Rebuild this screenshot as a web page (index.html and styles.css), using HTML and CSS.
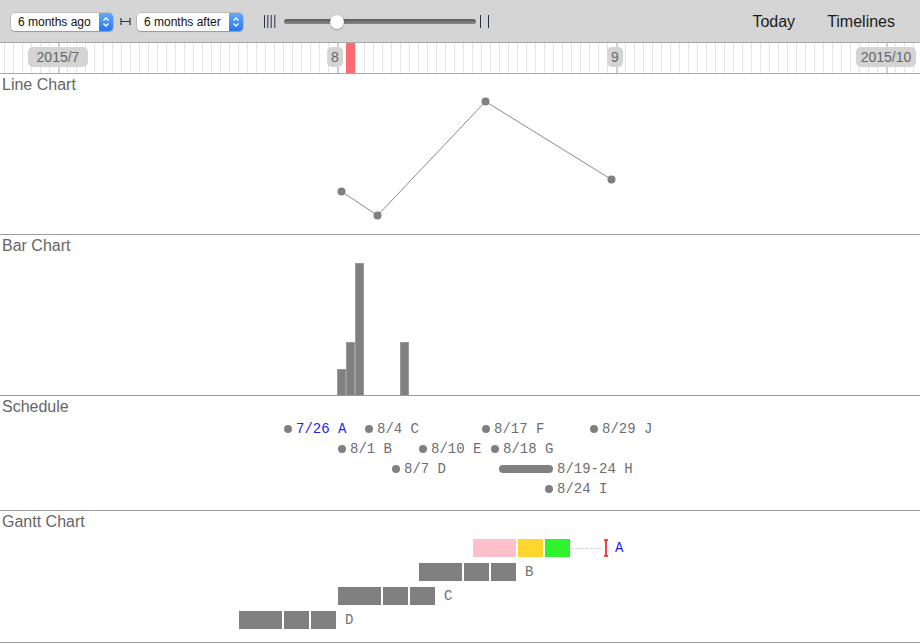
FILE: index.html
```html
<!DOCTYPE html>
<html>
<head>
<meta charset="utf-8">
<link rel="stylesheet" href="styles.css">
</head>
<body>
<div class="toolbar">
  <div class="tools-left">
    <div class="select w1"><span class="sel-text">6 months ago</span><span class="stepper"><svg width="14" height="18" viewBox="0 0 14 18"><path d="M4.5 7.5 L7 5 L9.5 7.5" fill="none" stroke="#fff" stroke-width="1.4"/><path d="M4.5 10.5 L7 13 L9.5 10.5" fill="none" stroke="#fff" stroke-width="1.4"/></svg></span></div>
    <svg class="span-icon" width="11" height="9" viewBox="0 0 11 9"><path d="M1 1 V8 M10 1 V8 M1 4.5 H10" stroke="#333" stroke-width="1.2" fill="none"/></svg>
    <div class="select w2"><span class="sel-text">6 months after</span><span class="stepper"><svg width="14" height="18" viewBox="0 0 14 18"><path d="M4.5 7.5 L7 5 L9.5 7.5" fill="none" stroke="#fff" stroke-width="1.4"/><path d="M4.5 10.5 L7 13 L9.5 10.5" fill="none" stroke="#fff" stroke-width="1.4"/></svg></span></div>
    <svg class="ticks4" width="12" height="14" viewBox="0 0 12 14"><path d="M0.5 0 V13 M3.8 0 V13 M7.2 0 V13 M10.8 0 V13" stroke="#2b2f44" stroke-width="1"/></svg>
    <div class="slider"><div class="track"></div><div class="thumb"></div></div>
    <svg class="ticks2" width="11" height="14" viewBox="0 0 11 14"><path d="M1.5 0 V13 M9.5 0 V13" stroke="#2b2f44" stroke-width="1"/></svg>
  </div>
  <div class="tools-right"><span class="tool">Today</span><span class="tool">Timelines</span></div>
</div>

<div class="ruler">
  <div class="mtick" style="left:58px"></div>
  <div class="mtick" style="left:337px"></div>
  <div class="mtick" style="left:616px"></div>
  <div class="mtick" style="left:886px"></div>
  <div class="today" style="left:346px"></div>
  <div class="mlabel year" style="left:58px">2015/7</div>
  <div class="mlabel" style="left:335px">8</div>
  <div class="mlabel" style="left:615px">9</div>
  <div class="mlabel year" style="left:886px">2015/10</div>
</div>

<section class="panel tall">
  <div class="title">Line Chart</div>
  <svg class="canvas" width="920" height="160" viewBox="0 0 920 160">
    <polyline points="341.5,117.5 377.5,141.5 485.5,27.5 611.5,105.5" fill="none" stroke="#8a8a8a" stroke-width="1"/>
    <circle cx="341.5" cy="117.5" r="4" fill="#808080"/>
    <circle cx="377.5" cy="141.5" r="4" fill="#808080"/>
    <circle cx="485.5" cy="27.5" r="4" fill="#808080"/>
    <circle cx="611.5" cy="105.5" r="4" fill="#808080"/>
  </svg>
</section>

<section class="panel tall">
  <div class="title">Bar Chart</div>
  <svg class="canvas" width="920" height="160" viewBox="0 0 920 160">
    <rect x="337.5" y="134.5" width="8" height="26" fill="#808080" stroke="#9a9a9a"/>
    <rect x="346.5" y="107.5" width="8" height="53" fill="#808080" stroke="#9a9a9a"/>
    <rect x="355.5" y="28.5" width="8" height="132" fill="#808080" stroke="#9a9a9a"/>
    <rect x="400.5" y="107.5" width="8" height="53" fill="#808080" stroke="#9a9a9a"/>
  </svg>
</section>

<section class="panel sched">
  <div class="title">Schedule</div>
  <div class="ev r1" style="left:283px"><span class="dot"></span><span class="ev-text blue">7/26 A</span></div>
  <div class="ev r1" style="left:364px"><span class="dot"></span><span class="ev-text">8/4 C</span></div>
  <div class="ev r1" style="left:481px"><span class="dot"></span><span class="ev-text">8/17 F</span></div>
  <div class="ev r1" style="left:589px"><span class="dot"></span><span class="ev-text">8/29 J</span></div>
  <div class="ev r2" style="left:337px"><span class="dot"></span><span class="ev-text">8/1 B</span></div>
  <div class="ev r2" style="left:418px"><span class="dot"></span><span class="ev-text">8/10 E</span></div>
  <div class="ev r2" style="left:490px"><span class="dot"></span><span class="ev-text">8/18 G</span></div>
  <div class="ev r3" style="left:391px"><span class="dot"></span><span class="ev-text">8/7 D</span></div>
  <div class="ev r3" style="left:499px"><span class="range" style="width:54px"></span><span class="ev-text">8/19-24 H</span></div>
  <div class="ev r4" style="left:544px"><span class="dot"></span><span class="ev-text">8/24 I</span></div>
</section>

<section class="panel gantt">
  <div class="title">Gantt Chart</div>
  <div class="gt g1" style="left:472px">
    <span class="seg pink d5"></span><span class="seg gold d3"></span><span class="seg green d3"></span>
    <span class="dash"></span>
    <svg class="ibeam" width="8" height="18" viewBox="0 0 8 18"><path d="M4 1 V17 M2 1 H6 M2 17 H6" stroke="#f01818" stroke-width="1.6" fill="none"/></svg>
    <span class="g-label blue">A</span>
  </div>
  <div class="gt g2" style="left:418px">
    <span class="seg gray d5"></span><span class="seg gray d3"></span><span class="seg gray d3"></span>
    <span class="g-label gap">B</span>
  </div>
  <div class="gt g3" style="left:337px">
    <span class="seg gray d5"></span><span class="seg gray d3"></span><span class="seg gray d3"></span>
    <span class="g-label gap">C</span>
  </div>
  <div class="gt g4" style="left:238px">
    <span class="seg gray d5"></span><span class="seg gray d3"></span><span class="seg gray d3"></span>
    <span class="g-label gap">D</span>
  </div>
</section>
</body>
</html>
```

FILE: styles.css
```css
* { box-sizing: border-box; }
html, body { margin: 0; padding: 0; background: #fff; }
body { width: 920px; height: 644px; overflow: hidden; font-family: "Liberation Sans", Arial, sans-serif; }

.toolbar {
  height: 43px;
  background: #d5d5d5;
  border-bottom: 1px solid #a8a8a8;
  display: flex;
  align-items: center;
  justify-content: space-between;
  padding: 1px 25px 0 11px;
}
.tools-left { display: flex; align-items: center; }
.select {
  height: 18px;
  background: #fff;
  border-radius: 4px;
  box-shadow: 0 0 0 0.5px rgba(0,0,0,0.22), 0 1px 1px rgba(0,0,0,0.18);
  display: flex;
  align-items: center;
  justify-content: space-between;
  padding-left: 7px;
  font-size: 12px;
  color: #111;
}
.sel-text { padding-top: 1px; }
.select.w1 { width: 102px; }
.select.w2 { width: 106px; margin-left: 6px; }
.stepper {
  width: 14px;
  height: 18px;
  border-radius: 0 4px 4px 0;
  background: linear-gradient(#63a9fb, #2a76ee);
  display: flex;
}
.span-icon { margin-left: 7px; }
.ticks4 { margin-left: 21px; }
.slider { position: relative; width: 192px; height: 14px; margin-left: 8px; display: flex; align-items: center; }
.track {
  width: 100%;
  height: 5px;
  border-radius: 3px;
  background: linear-gradient(#5a5a5a, #8a8a8a);
}
.thumb {
  position: absolute;
  left: 46px;
  top: 0;
  width: 14px;
  height: 14px;
  border-radius: 50%;
  background: #fff;
  box-shadow: 0 0.5px 1.5px rgba(0,0,0,0.45);
}
.ticks2 { margin-left: 3px; }
.tools-right { display: flex; gap: 32px; }
.tool { font-size: 16px; color: #1a1a1a; }

.ruler {
  position: relative;
  height: 31px;
  border-bottom: 1px solid #a8a8a8;
  background: repeating-linear-gradient(to right, transparent 0 4px, #e3e3e3 4px 5px, transparent 5px 9px);
  overflow: hidden;
}
.mtick { position: absolute; top: 0; bottom: 0; width: 2px; margin-left: -0.5px; background: #d2d2d2; }
.today { position: absolute; top: 0; bottom: 0; width: 9px; background: #fa6b73; }
.mlabel {
  position: absolute;
  top: 4px;
  height: 20px;
  line-height: 21px;
  padding: 0 4px;
  transform: translateX(-50%);
  background: #d4d4d4;
  border-radius: 5px;
  color: #666;
  font-size: 14px;
  text-align: center;
}
.mlabel.year { min-width: 60px; }

.panel { position: relative; border-bottom: 1px solid #9b9b9b; }
.panel.tall { height: 161px; }
.panel.sched { height: 115px; }
.panel.gantt { height: 132px; }
.title {
  position: relative;
  z-index: 1;
  padding: 1px 0 0 2px;
  line-height: 20px;
  font-size: 16px;
  color: #666;
}
.canvas { position: absolute; left: 0; top: 0; }

.ev {
  position: absolute;
  height: 20px;
  display: flex;
  align-items: center;
}
.ev.r1 { top: 23px; }
.ev.r2 { top: 43px; }
.ev.r3 { top: 63px; }
.ev.r4 { top: 83px; }
.dot { width: 8px; height: 8px; margin-left: 1px; border-radius: 50%; background: #808080; margin-right: 4px; }
.range { height: 8px; border-radius: 4px; background: #808080; margin-right: 4px; }
.ev-text, .g-label {
  font-family: "Liberation Mono", "Courier New", monospace;
  font-size: 14px;
  color: #6f6f6f;
  white-space: pre;
}
.blue { color: #1d1dff; }

.gt { position: absolute; height: 18px; display: flex; align-items: center; }
.gt.g1 { top: 28px; }
.gt.g2 { top: 52px; }
.gt.g3 { top: 76px; }
.gt.g4 { top: 100px; }
.seg { height: 18px; border-left: 1px solid #fff; border-right: 1px solid #fff; }
.seg.d5 { width: 45px; }
.seg.d3 { width: 27px; }
.seg.gray { background: #808080; }
.seg.pink { background: #ffc0cb; }
.seg.gold { background: #ffd52e; }
.seg.green { background: #2ef42e; }
.dash { width: 31px; border-top: 1px dashed #cfcfcf; }
.ibeam { display: block; }
.g-label { margin-left: 5px; }
.g-label.gap { margin-left: 8px; }
```
